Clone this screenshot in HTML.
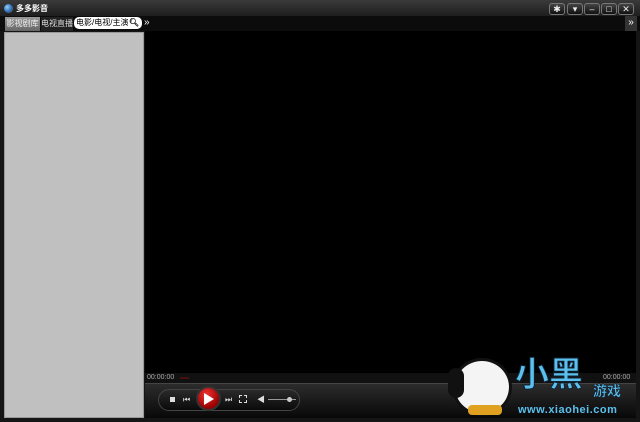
<!DOCTYPE html>
<html><head><meta charset="utf-8"><style>
*{margin:0;padding:0;box-sizing:border-box}
body{width:640px;height:422px;background:#151515;position:relative;overflow:hidden;font-family:"Liberation Sans","Noto Sans CJK SC",sans-serif}
.abs{position:absolute}
.title{left:0;top:0;width:640px;height:16px;background:linear-gradient(#3a3a3a,#1e1e1e);}
.btn{top:3px;width:16px;height:12px;border:1px solid #777;border-radius:3px;background:linear-gradient(#444,#111);color:#eee;font-size:9px;line-height:10px;text-align:center}
</style></head><body>
<div class="abs title"></div>
<div class="abs" style="left:4px;top:4px;width:9px;height:9px;border-radius:50%;background:radial-gradient(circle at 35% 35%,#9cf,#26a 60%,#c63)"></div>
<div class="abs" style="left:16px;top:3px;font-size:8px;color:#fff;font-weight:bold">多多影音</div>
<div class="abs btn" style="left:549px">✱</div>
<div class="abs btn" style="left:567px">▾</div>
<div class="abs btn" style="left:584px">–</div>
<div class="abs btn" style="left:601px">□</div>
<div class="abs btn" style="left:618px">✕</div>
<div class="abs" style="left:0;top:16px;width:640px;height:15px;background:#0c0c0c"></div>
<div class="abs" style="left:5px;top:17px;width:35px;height:14px;background:linear-gradient(#999,#666);color:#eee;font-size:8px;line-height:14px;text-align:center">影视剧库</div>
<div class="abs" style="left:41px;top:17px;width:32px;height:14px;background:#222;color:#ddd;font-size:8px;line-height:14px;text-align:center">电视直播</div>
<div class="abs" style="left:74px;top:17px;width:68px;height:12px;background:#fff;border-radius:5px;font-size:8px;line-height:12px;padding-left:2px;color:#000">电影/电视/主演 <span style="position:absolute;right:3px;top:0;font-weight:bold">🔍︎</span></div>
<div class="abs" style="left:144px;top:16px;color:#fff;font-size:10px;line-height:14px">»</div>
<div class="abs" style="left:625px;top:16px;width:12px;height:15px;background:#333;color:#fff;font-size:10px;line-height:14px;text-align:center">»</div>
<div class="abs" style="left:0;top:31px;width:4px;height:391px;background:#151515"></div>
<div class="abs" style="left:4px;top:32px;width:140px;height:386px;background:#c0c0c0;border:1px solid #999"></div>
<div class="abs" style="left:145px;top:31px;width:491px;height:342px;background:#000"></div>
<div class="abs" style="left:145px;top:373px;width:491px;height:10px;background:#111"></div>
<div class="abs" style="left:147px;top:374px;font-size:7px;color:#aaa">00:00:00</div>
<div class="abs" style="left:180px;top:377px;width:9px;height:2px;background:#411"></div>
<div class="abs" style="left:145px;top:383px;width:491px;height:35px;background:linear-gradient(#2c2c2c,#080808);border-top:1px solid #444"></div>
<div class="abs" style="left:158px;top:389px;width:142px;height:22px;border-radius:11px;background:linear-gradient(#2a2a2a,#0a0a0a);border:1px solid #444"></div>
<div class="abs" style="left:170px;top:397px;width:5px;height:5px;background:#ddd"></div>
<div class="abs" style="left:183px;top:395px;color:#ddd;font-size:8px">⏮</div>
<div class="abs" style="left:196px;top:386px;width:25px;height:25px;border-radius:50%;background:radial-gradient(circle at 40% 30%,#e33,#900 70%);border:2px solid #333"></div>
<div class="abs" style="left:204px;top:393px;width:0;height:0;border-left:10px solid #fff;border-top:6px solid transparent;border-bottom:6px solid transparent"></div>
<div class="abs" style="left:225px;top:395px;color:#ddd;font-size:8px">⏭</div>
<div class="abs" style="left:239px;top:395px;width:8px;height:8px;border:1px dashed #ddd"></div>
<div class="abs" style="left:257px;top:394px;color:#ddd;font-size:8px">◀</div>
<div class="abs" style="left:268px;top:399px;width:28px;height:1px;background:#999"></div>
<div class="abs" style="left:287px;top:397px;width:5px;height:5px;border-radius:50%;background:#ccc"></div>
<div class="abs" style="left:603px;top:374px;font-size:7px;color:#aaa">00:00:00</div>
<!-- watermark -->
<div class="abs" style="left:452px;top:358px;width:60px;height:58px;border-radius:50%;background:#f4f4f4;border:3px solid #111"></div>
<div class="abs" style="left:448px;top:368px;width:16px;height:30px;border-radius:8px;background:#111"></div>
<div class="abs" style="left:468px;top:405px;width:34px;height:10px;border-radius:4px;background:#e0a020"></div>
<div class="abs" style="left:515px;top:355px;font-size:34px;font-weight:bold;color:#5bc0ee;line-height:40px;-webkit-text-stroke:1px #123">小黑</div>
<div class="abs" style="left:593px;top:381px;font-size:14px;font-weight:bold;color:#5bc0ee;-webkit-text-stroke:0.5px #123">游戏</div>
<div class="abs" style="left:518px;top:404px;font-size:11px;font-weight:bold;color:#5bc0ee;letter-spacing:0.5px">www.xiaohei.com</div>
<div class="abs" style="left:0;top:418px;width:640px;height:4px;background:#151515"></div>
</body></html>
